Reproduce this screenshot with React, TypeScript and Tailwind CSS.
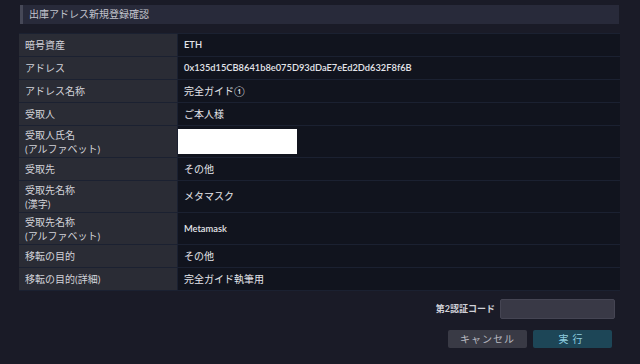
import React from "react";

const rows: { label: string[]; value: string; tall?: boolean; latin?: boolean }[] = [
  { label: ["暗号資産"], value: "ETH", latin: true },
  { label: ["アドレス"], value: "0x135d15CB8641b8e075D93dDaE7eEd2Dd632F8f6B", latin: true },
  { label: ["アドレス名称"], value: "完全ガイド①" },
  { label: ["受取人"], value: "ご本人様" },
  { label: ["受取人氏名", "(アルファベット)"], value: "__white__", tall: true },
  { label: ["受取先"], value: "その他" },
  { label: ["受取先名称", "(漢字)"], value: "メタマスク", tall: true },
  { label: ["受取先名称", "(アルファベット)"], value: "Metamask", tall: true, latin: true },
  { label: ["移転の目的"], value: "その他" },
  { label: ["移転の目的(詳細)"], value: "完全ガイド執筆用" },
];

export default function App() {
  return (
    <div
      className="w-[640px] h-[364px] bg-[#1a1b27] text-[10px] text-[#d6d7dd] overflow-hidden"
      style={{ fontFamily: '"Lato", "Noto Sans CJK JP", sans-serif' }}
    >
      <div className="pt-[5px] pl-[20px] w-[619px]">
        <div className="h-[19px] bg-[#282a3a] flex items-center">
          <div className="w-[3px] h-full bg-[#464857]" />
          <span className="ml-[6px] text-[#c3c4cc]">出庫アドレス新規登録確認</span>
        </div>
      </div>
      <div className="mt-[9px] ml-[19px] w-[601px] grid grid-cols-[158px_442px] gap-px bg-[#1b2131] border-t border-b border-[#1b2131]">
        {rows.map((r, i) => (
          <React.Fragment key={i}>
            <div
              className={`bg-[#2a2c35] pl-[6px] flex flex-col justify-center text-[#d2d3d9] leading-[14px] ${
                r.tall ? "h-[31px]" : "h-[22px]"
              }`}
            >
              {r.label.map((l, j) => (
                <span key={j}>{l}</span>
              ))}
            </div>
            <div
              className={`bg-[#11141e] flex items-center ${r.tall ? "h-[31px]" : "h-[22px]"} ${
                r.value === "__white__" ? "pl-0" : "pl-[6px]"
              }`}
            >
              {r.value === "__white__" ? (
                <div className="w-[119px] h-[25px] bg-white" />
              ) : (
                <span className={`text-[#e4e5ea] ${r.latin ? "text-[9.3px] font-semibold" : ""}`}>{r.value}</span>
              )}
            </div>
          </React.Fragment>
        ))}
      </div>
      <div className="mt-[8px] w-[615px] flex justify-end items-center gap-[5px]">
        <span className="font-bold text-[9px] text-[#d0d1d8]">第2認証コード</span>
        <div className="w-[115px] h-[20px] bg-[#393946] border border-[#454553] rounded-[2px]" />
      </div>
      <div className="mt-[11px] w-[612px] flex justify-end gap-[6px]">
        <div className="w-[79px] h-[18px] rounded-[2px] bg-[#393a45] flex items-center justify-center text-[#b9bac2] tracking-[1px]">
          キャンセル
        </div>
        <div className="w-[79px] h-[18px] rounded-[2px] bg-[#1d4657] flex items-center justify-center text-[#8fcfe0] tracking-[4px]">
          実行
        </div>
      </div>
    </div>
  );
}
